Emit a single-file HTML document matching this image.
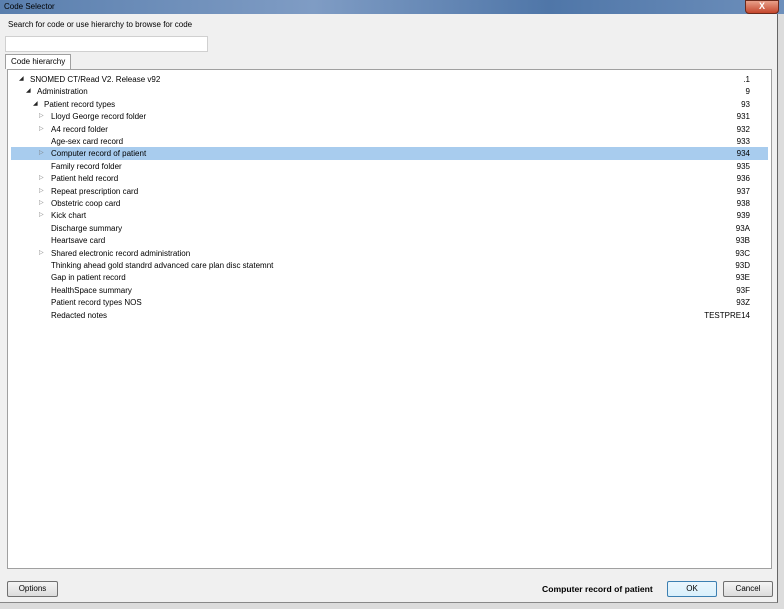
<!DOCTYPE html>
<html><head><style>
body{margin:0;width:784px;height:609px;background:#dcdcdc;font-family:"Liberation Sans",sans-serif;font-size:8px;color:#000;position:relative;overflow:hidden}
.title{position:absolute;left:0;top:0;width:784px;height:14px;background:linear-gradient(90deg,#5a7fae,#7f9cc4 40%,#4f76a8 70%,#6d8fbb);}
.title span{position:absolute;left:4px;top:2px;color:#000;font-size:8px}
.x{position:absolute;left:745px;top:0;width:32px;height:12px;background:linear-gradient(#e8a08a,#c4462c);border:1px solid #6b2a1c;border-radius:0 0 4px 4px;color:#fff;font-size:9px;text-align:center;line-height:11px;font-weight:bold}
.dlg{position:absolute;left:0;top:14px;width:777px;height:588px;background:#f0f0f0;border-right:1px solid #666;border-bottom:1px solid #888}
.abs{position:absolute;white-space:nowrap}
.panel{position:absolute;left:7px;top:69px;width:763px;height:498px;background:#fff;border:1px solid #a0a0a0}
.row{position:absolute;height:12.4px;line-height:13.4px;left:3px;width:757px;white-space:nowrap}
.row .c{position:absolute;right:18px;top:0}
.row.sel{background:#a8ccee}
.tri{position:absolute;font-size:6px;color:#777}
.tri.e{color:#222}
.btn{position:absolute;height:14px;border:1px solid #707070;background:linear-gradient(#f4f4f4,#dcdcdc);border-radius:2px;text-align:center;line-height:14px}
</style></head><body>
<div class="title"><span>Code Selector</span><div class="x">X</div></div>
<div class="dlg">
<div class="abs" style="left:8px;top:6px">Search for code or use hierarchy to browse for code</div>
<div class="abs" style="left:5px;top:22px;width:201px;height:14px;background:#fff;border:1px solid #d0d0d0"></div>
<div class="abs" style="left:5px;top:40px;width:66px;height:15px;background:#fff;border:1px solid #a0a0a0;border-bottom:none;line-height:14px;padding-left:5px;box-sizing:border-box;z-index:2">Code hierarchy</div>
</div>
<div class="panel">
<div class="row" style="top:3px"><span class="tri e" style="left:8px">◢</span><span class="abs" style="left:19px">SNOMED CT/Read V2. Release v92</span><span class="c">.1</span></div>
<div class="row" style="top:15.4px"><span class="tri e" style="left:15px">◢</span><span class="abs" style="left:26px">Administration</span><span class="c">9</span></div>
<div class="row" style="top:27.8px"><span class="tri e" style="left:22px">◢</span><span class="abs" style="left:33px">Patient record types</span><span class="c">93</span></div>
<div class="row" style="top:40.2px"><span class="tri" style="left:28px">▷</span><span class="abs" style="left:40px">Lloyd George record folder</span><span class="c">931</span></div>
<div class="row" style="top:52.6px"><span class="tri" style="left:28px">▷</span><span class="abs" style="left:40px">A4 record folder</span><span class="c">932</span></div>
<div class="row" style="top:65px"><span class="abs" style="left:40px">Age-sex card record</span><span class="c">933</span></div>
<div class="row sel" style="top:77.4px"><span class="tri" style="left:28px">▷</span><span class="abs" style="left:40px">Computer record of patient</span><span class="c">934</span></div>
<div class="row" style="top:89.8px"><span class="abs" style="left:40px">Family record folder</span><span class="c">935</span></div>
<div class="row" style="top:102.2px"><span class="tri" style="left:28px">▷</span><span class="abs" style="left:40px">Patient held record</span><span class="c">936</span></div>
<div class="row" style="top:114.6px"><span class="tri" style="left:28px">▷</span><span class="abs" style="left:40px">Repeat prescription card</span><span class="c">937</span></div>
<div class="row" style="top:127px"><span class="tri" style="left:28px">▷</span><span class="abs" style="left:40px">Obstetric coop card</span><span class="c">938</span></div>
<div class="row" style="top:139.4px"><span class="tri" style="left:28px">▷</span><span class="abs" style="left:40px">Kick chart</span><span class="c">939</span></div>
<div class="row" style="top:151.8px"><span class="abs" style="left:40px">Discharge summary</span><span class="c">93A</span></div>
<div class="row" style="top:164.2px"><span class="abs" style="left:40px">Heartsave card</span><span class="c">93B</span></div>
<div class="row" style="top:176.6px"><span class="tri" style="left:28px">▷</span><span class="abs" style="left:40px">Shared electronic record administration</span><span class="c">93C</span></div>
<div class="row" style="top:189px"><span class="abs" style="left:40px">Thinking ahead gold standrd advanced care plan disc statemnt</span><span class="c">93D</span></div>
<div class="row" style="top:201.4px"><span class="abs" style="left:40px">Gap in patient record</span><span class="c">93E</span></div>
<div class="row" style="top:213.8px"><span class="abs" style="left:40px">HealthSpace summary</span><span class="c">93F</span></div>
<div class="row" style="top:226.2px"><span class="abs" style="left:40px">Patient record types NOS</span><span class="c">93Z</span></div>
<div class="row" style="top:238.6px"><span class="abs" style="left:40px">Redacted notes</span><span class="c">TESTPRE14</span></div>
</div>
<div class="btn" style="left:7px;top:581px;width:49px">Options</div>
<div class="abs" style="left:542px;top:584px;font-weight:bold;font-size:8.6px">Computer record of patient</div>
<div class="btn" style="left:667px;top:581px;width:48px;border-color:#3c7fb1;background:linear-gradient(#eaf6fd,#d9f0fc)">OK</div>
<div class="btn" style="left:723px;top:581px;width:48px">Cancel</div>
</body></html>
